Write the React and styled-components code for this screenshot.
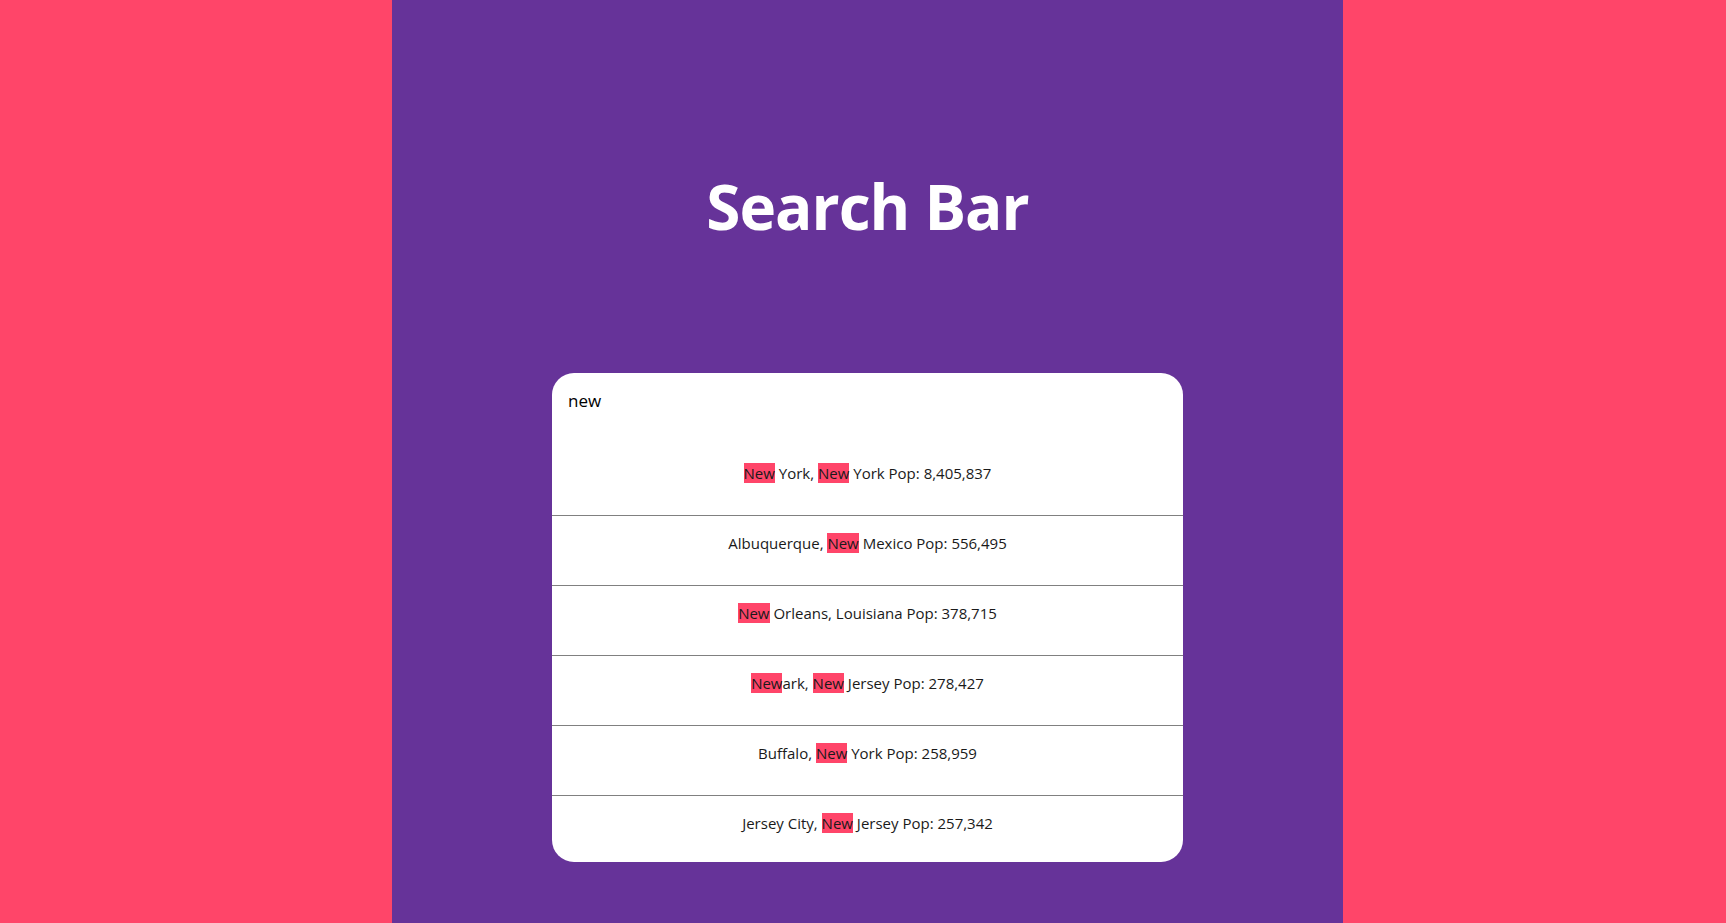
import React from 'react';
import styled, { createGlobalStyle } from 'styled-components';

const cities = [
    { city: 'New York', state: 'New York', pop: '8,405,837' },
    { city: 'Albuquerque', state: 'New Mexico', pop: '556,495' },
    { city: 'New Orleans', state: 'Louisiana', pop: '378,715' },
    { city: 'Newark', state: 'New Jersey', pop: '278,427' },
    { city: 'Buffalo', state: 'New York', pop: '258,959' },
    { city: 'Jersey City', state: 'New Jersey', pop: '257,342' },
];

const query = 'new';

const Highlight = ({ text }) => {
    const parts = text.split(new RegExp(`(${query})`, 'gi'));
    return parts.map((part, i) =>
        part.toLowerCase() === query ? <Mark key={i}>{part}</Mark> : <React.Fragment key={i}>{part}</React.Fragment>
    );
};

const App = () => {
    return (
        <>
            <GlobalStyle />
            <Page>
                <Side />
                <Main>
                    <Title>Search Bar</Title>
                    <Card>
                        <SearchInput defaultValue="new" />
                        <Results>
                            {cities.map((c) => (
                                <Row key={c.city}>
                                    <span>
                                        <Highlight text={`${c.city}, ${c.state}`} /> Pop: {c.pop}
                                    </span>
                                </Row>
                            ))}
                        </Results>
                    </Card>
                </Main>
                <Side />
            </Page>
        </>
    );
};
export default App;

const GlobalStyle = createGlobalStyle`
    body{
        margin: 0;
        font-family: 'Open Sans', 'Noto Sans', sans-serif;
        background: #ff4569;
    }
`

const Page = styled.div`
    display: grid;
    grid-template-columns: 392px 951px 1fr;
    min-height: 100vh;
`

const Side = styled.div`
    background: #ff4569;
`

const Main = styled.main`
    background: #663399;
    display: flex;
    flex-direction: column;
    align-items: center;
    padding-top: 168px;
`

const Title = styled.h1`
    margin: 0 0 128px;
    color: #fff;
    font-size: 62px;
    line-height: 77px;
    font-weight: 700;
    letter-spacing: -1px;
`

const Card = styled.div`
    width: 631px;
    height: 489px;
    background: #fff;
    border-radius: 22px;
    overflow: hidden;
`

const SearchInput = styled.input`
    display: block;
    width: 100%;
    box-sizing: border-box;
    height: 54px;
    margin-bottom: 19px;
    padding: 0 16px;
    border: none;
    outline: none;
    background: transparent;
    font-family: 'Open Sans', sans-serif;
    font-size: 17px;
    color: #000;
`

const Results = styled.div`
    display: flex;
    flex-direction: column;
`

const Row = styled.div`
    box-sizing: border-box;
    height: 70px;
    padding-top: 17px;
    border-bottom: 1px solid #808080;
    text-align: center;
    font-size: 15px;
    line-height: 21px;
    color: #1a1a1a;

    &:last-child{
        border-bottom: none;
    }
`

const Mark = styled.span`
    background: #ff4569;
`
